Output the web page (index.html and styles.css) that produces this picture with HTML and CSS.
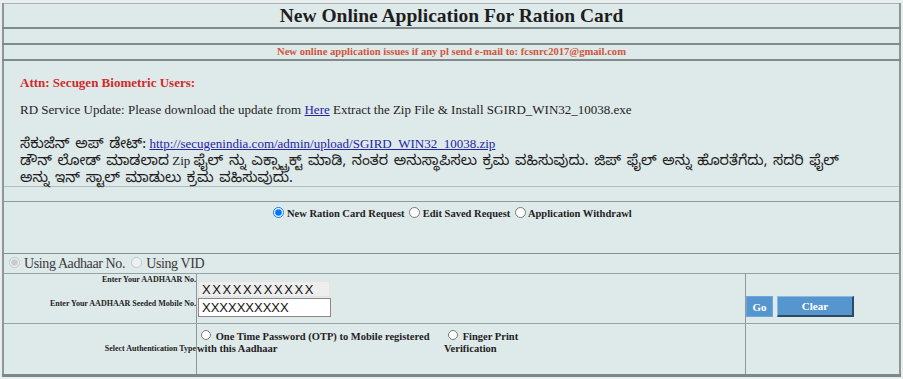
FILE: index.html
```html
<!DOCTYPE html>
<html lang="en">
<head>
	<meta charset="UTF-8">
	<title>New Online Application For Ration Card</title>
	<link rel="stylesheet" href="styles.css">
</head>
<body>
	<table class="app">
		<tr><td colspan="3" class="title">New Online Application For Ration Card</td></tr>
		<tr><td colspan="3" class="blank"></td></tr>
		<tr><td colspan="3" class="mail">New online application issues if any pl send e-mail to: fcsnrc2017@gmail.com</td></tr>
		<tr>
			<td colspan="3" class="notice">
				<div class="attn">Attn: Secugen Biometric Users:</div>
				<div class="ln">RD Service Update: Please download the update from <a href="#">Here</a> Extract the Zip File &amp; Install SGIRD_WIN32_10038.exe</div>
				<div class="ln"></div>
				<div class="ln"><span class="kn">ಸೆಕುಜೆನ್ ಅಪ್ ಡೇಟ್:</span> <a href="#">http://secugenindia.com/admin/upload/SGIRD_WIN32_10038.zip</a></div>
				<div class="ln"><span class="kn">ಡೌನ್ ಲೋಡ್ ಮಾಡಲಾದ</span> Zip <span class="kn">ಫೈಲ್ ನ್ನು ಎಕ್ಸ್ಟ್ರಾಕ್ಟ್ ಮಾಡಿ, ನಂತರ ಅನುಸ್ಥಾಪಿಸಲು ಕ್ರಮ ವಹಿಸುವುದು. ಜಿಪ್ ಫೈಲ್ ಅನ್ನು ಹೊರತೆಗೆದು, ಸದರಿ ಫೈಲ್</span></div>
				<div class="ln"><span class="kn">ಅನ್ನು ಇನ್ ಸ್ಟಾಲ್ ಮಾಡುಲು ಕ್ರಮ ವಹಿಸುವುದು.</span></div>
			</td>
		</tr>
		<tr><td colspan="3" class="blank gap"></td></tr>
		<tr>
			<td colspan="3" class="choice">
				<label><input type="radio" name="req" checked> New Ration Card Request</label>
				<label><input type="radio" name="req"> Edit Saved Request</label>
				<label><input type="radio" name="req"> Application Withdrawl</label>
			</td>
		</tr>
		<tr>
			<td colspan="3" class="using">
				<label><input type="radio" name="idtype" checked disabled> Using Aadhaar No.</label>
				<label><input type="radio" name="idtype" disabled> Using VID</label>
			</td>
		</tr>
		<tr class="entry">
			<td class="labels">
				<div class="lbl first">Enter Your AADHAAR No.</div>
				<div class="lbl second">Enter Your AADHAAR Seeded Mobile No.</div>
			</td>
			<td class="inputs">
				<input type="text" class="aadhaar" value="XXXXXXXXXXX" readonly>
				<input type="text" class="mobile" value="XXXXXXXXXX">
			</td>
			<td class="actions">
				<button class="btn go">Go</button><button class="btn clear">Clear</button>
			</td>
		</tr>
		<tr class="auth">
			<td class="labels mid"><div class="lbl">Select Authentication Type</div></td>
			<td class="opts">
				<label class="opt otp"><input type="radio" name="auth"> One Time Password (OTP) to Mobile registered with this Aadhaar</label><label class="opt fp"><input type="radio" name="auth"> Finger Print Verification</label>
			</td>
			<td></td>
		</tr>
	</table>
</body>
</html>
```

FILE: styles.css
```css
body {
	margin: 0;
	padding: 3px 2px 0 2px;
	background: #e8eeee;
	font-family: "Liberation Serif", "Times New Roman", serif;
	color: #1e1e1e;
}
table.app {
	width: 899px;
	border-collapse: collapse;
	background: #dee9e9;
	border-left: 2px solid #8c9898;
	border-right: 2px solid #8c9898;
	border-top: 1px solid #b7c2c2;
	border-bottom: 3px solid #7c8888;
}
table.app td {
	padding: 0;
	border-top: 1px solid #a6b2b2;
	border-bottom: 1px solid #a6b2b2;
}
/*top rows*/
td.title {
	height: 23px;
	font-size: 19.5px;
	font-weight: bold;
	text-align: center;
	line-height: 23px;
	border-bottom: 2px solid #7f8b8b !important;
}
td.blank {
	height: 14px;
	border-bottom: 2px solid #7f8b8b !important;
}
td.mail {
	height: 14px;
	line-height: 14px;
	font-size: 10.6px;
	font-weight: bold;
	text-align: center;
	color: #d0553c;
	border-bottom: 2px solid #7f8b8b !important;
}
td.notice {
	padding: 13px 10px 0 16px !important;
	vertical-align: top;
	font-size: 13px;
	border-bottom: 1px solid #b3bebe !important;
}
td.notice .attn {
	color: #d12a2a;
	font-weight: bold;
	line-height: 17px;
	margin-bottom: 10px;
}
td.notice .ln {
	height: 17px;
	line-height: 17px;
	white-space: nowrap;
}
td.notice .kn {
	font-family: "Noto Sans Kannada", "Noto Sans", sans-serif;
	font-size: 14.4px;
	word-spacing: 1.5px;
}
td.notice a {
	color: #2424a6;
}
td.blank.gap {
	height: 14px;
	border-bottom: 1px solid #8e9a9a !important;
}
/*radios*/
td.choice {
	height: 46px;
	vertical-align: top;
	text-align: center;
	padding-top: 5px !important;
	font-size: 10.5px;
	font-weight: bold;
	border-bottom: 1px solid #86928f !important;
}
td.choice input {
	width: 11px;
	height: 11px;
	margin: 0 0 0 2px;
	vertical-align: -1px;
}
td.using {
	height: 19px;
	font-size: 14px;
	letter-spacing: -0.4px;
	color: #3a3a3a;
	padding-left: 2px !important;
	border-bottom: 1px solid #96a2a2 !important;
}
td.using input {
	width: 11px;
	height: 11px;
	margin: 0 1px 0 3px;
	vertical-align: 0;
}
/*form rows*/
tr.entry td, tr.auth td {
	border-left: 1px solid #8c9898;
	vertical-align: top;
	border-bottom: 1px solid #97a3a3;
}
td.labels {
	width: 192px;
	text-align: right;
}
.lbl {
	font-size: 8px;
	font-weight: bold;
	line-height: 10px;
}
.lbl.first {
	margin-top: 1px;
}
.lbl.second {
	margin-top: 14px;
}
tr.entry td.labels {
	height: 49px;
}
td.inputs {
	width: 547px;
	padding: 7px 0 0 1px !important;
}
td.inputs input {
	display: block;
	box-sizing: border-box;
	width: 133px;
	font-family: "Liberation Sans", Arial, sans-serif;
	font-size: 13px;
	color: #111;
	padding: 0 3px;
	outline: none;
}
td.inputs input.aadhaar {
	height: 16px;
	width: 132px;
	background: #eeeeee;
	border: 1px solid #e4e4e4;
	letter-spacing: 1.6px;
}
td.inputs input.mobile {
	height: 19px;
	margin-top: 1px;
	background: #fff;
	border: 1px solid #8a8a8a;
}
td.actions {
	padding-top: 22px !important;
}
.btn {
	height: 21px;
	font-family: "Liberation Serif", serif;
	font-size: 11px;
	font-weight: bold;
	color: #fff;
	background: #5596cf;
	padding: 0;
	cursor: pointer;
	vertical-align: top;
}
.btn.go {
	width: 27px;
	border: 1px solid #6fa8d8;
}
.btn.clear {
	width: 77px;
	margin-left: 4px;
	border-top: 1px solid #8bbbe3;
	border-left: 1px solid #8bbbe3;
	border-right: 2px solid #2f4a63;
	border-bottom: 2px solid #2f4a63;
}
tr.auth td.labels {
	height: 50px;
	vertical-align: middle;
}
tr.auth td {
	border-bottom: none !important;
}
td.opts {
	padding: 6px 0 0 0 !important;
	font-size: 10.5px;
	font-weight: bold;
	line-height: 12px;
}
.opt {
	display: inline-block;
	vertical-align: top;
}
.opt.otp {
	width: 247px;
}
.opt.fp {
	width: 80px;
}
.opt input {
	width: 10px;
	height: 10px;
	margin: 0 2px 0 4px;
	vertical-align: 0;
}
```
